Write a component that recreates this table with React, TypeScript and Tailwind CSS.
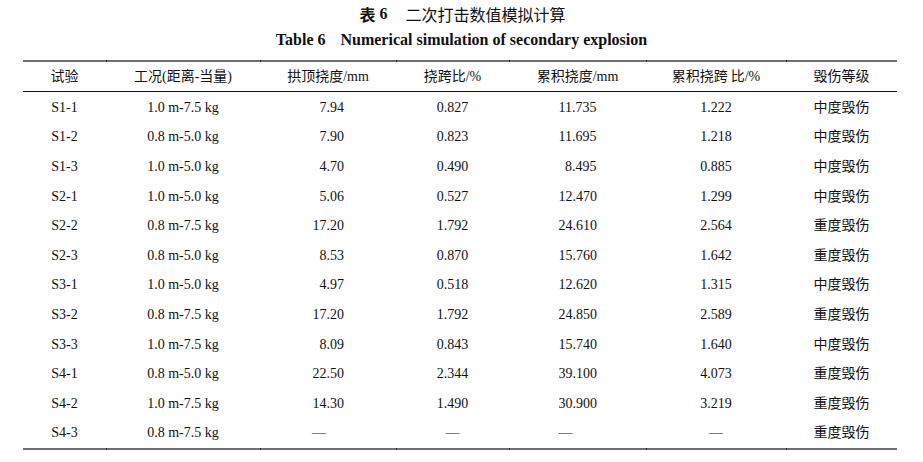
import React from "react";

type Row = [string, string, string, string, string, string, string];

const rows: Row[] = [
  ["S1-1", "1.0 m-7.5 kg", "7.94", "0.827", "11.735", "1.222", "中度毁伤"],
  ["S1-2", "0.8 m-5.0 kg", "7.90", "0.823", "11.695", "1.218", "中度毁伤"],
  ["S1-3", "1.0 m-5.0 kg", "4.70", "0.490", "8.495", "0.885", "中度毁伤"],
  ["S2-1", "1.0 m-5.0 kg", "5.06", "0.527", "12.470", "1.299", "中度毁伤"],
  ["S2-2", "0.8 m-7.5 kg", "17.20", "1.792", "24.610", "2.564", "重度毁伤"],
  ["S2-3", "0.8 m-5.0 kg", "8.53", "0.870", "15.760", "1.642", "重度毁伤"],
  ["S3-1", "1.0 m-5.0 kg", "4.97", "0.518", "12.620", "1.315", "中度毁伤"],
  ["S3-2", "0.8 m-7.5 kg", "17.20", "1.792", "24.850", "2.589", "重度毁伤"],
  ["S3-3", "1.0 m-7.5 kg", "8.09", "0.843", "15.740", "1.640", "中度毁伤"],
  ["S4-1", "0.8 m-5.0 kg", "22.50", "2.344", "39.100", "4.073", "重度毁伤"],
  ["S4-2", "1.0 m-7.5 kg", "14.30", "1.490", "30.900", "3.219", "重度毁伤"],
  ["S4-3", "0.8 m-7.5 kg", "—", "—", "—", "—", "重度毁伤"],
];

const gridCols = "grid grid-cols-[83px_154px_136px_113px_137px_140px_111px]";

function NumCell({ v, box }: { v: string; box: "c3" | "c4" | "c5" | "c6" }) {
  const dash = v === "—";
  if (box === "c3") {
    return (
      <div className="flex items-center justify-center">
        <span className={`inline-block w-[32px] ${dash ? "text-left" : "text-right"}`}>{v}</span>
      </div>
    );
  }
  if (box === "c5") {
    return (
      <div className="flex items-center justify-center">
        <span className={`inline-block w-[38px] ${dash ? "text-left" : "text-right"}`}>{v}</span>
      </div>
    );
  }
  return <div className="flex items-center justify-center">{v}</div>;
}

function Rule() {
  const ticks = [106, 260, 396, 509, 646, 786];
  return (
    <div className="relative h-[2px] bg-[#707070]">
      {ticks.map((t) => (
        <div key={t} className="absolute top-0 h-[2px] w-[1px] bg-[#2a2a2a]" style={{ left: t - 23 }} />
      ))}
    </div>
  );
}

export default function App() {
  return (
    <div className="w-[923px] h-[462px] bg-white text-[#111] font-['Liberation_Serif','Noto_Sans_CJK_SC',serif] overflow-hidden">
      <div className="pt-[4px] flex justify-center h-[24px] items-center text-[16px] leading-[20px] pl-[2px]">
        <span className="font-['Noto_Sans_CJK_SC',sans-serif] font-bold">表</span>
        <span className="ml-[4px] font-bold font-['Liberation_Serif',serif]">6</span>
        <span className="ml-[18px] font-['Noto_Sans_CJK_SC',sans-serif]">二次打击数值模拟计算</span>
      </div>
      <div className="mt-[6px] flex justify-center text-[16px] leading-[20px] font-bold font-['Liberation_Serif',serif]">
        <span>Table 6</span>
        <span className="ml-[15px]">Numerical simulation of secondary explosion</span>
      </div>
      <div className="mt-[10px] ml-[23px] w-[874px] text-[14px]">
        <Rule />
        <div className={`${gridCols} h-[30px] items-center text-center border-b border-[#111]`}>
          <div>试验</div>
          <div>工况(距离-当量)</div>
          <div>拱顶挠度/mm</div>
          <div>挠跨比/%</div>
          <div>累积挠度/mm</div>
          <div>
            累积挠跨<span className="ml-[3px]">比/%</span>
          </div>
          <div>毁伤等级</div>
        </div>
        <div className="pt-[1px]">
          {rows.map((r) => (
            <div key={r[0]} className={`${gridCols} h-[29.6px] items-center text-center leading-none`}>
              <div>{r[0]}</div>
              <div>{r[1]}</div>
              <NumCell v={r[2]} box="c3" />
              <NumCell v={r[3]} box="c4" />
              <NumCell v={r[4]} box="c5" />
              <NumCell v={r[5]} box="c6" />
              <div>{r[6]}</div>
            </div>
          ))}
        </div>
        <Rule />
      </div>
    </div>
  );
}
